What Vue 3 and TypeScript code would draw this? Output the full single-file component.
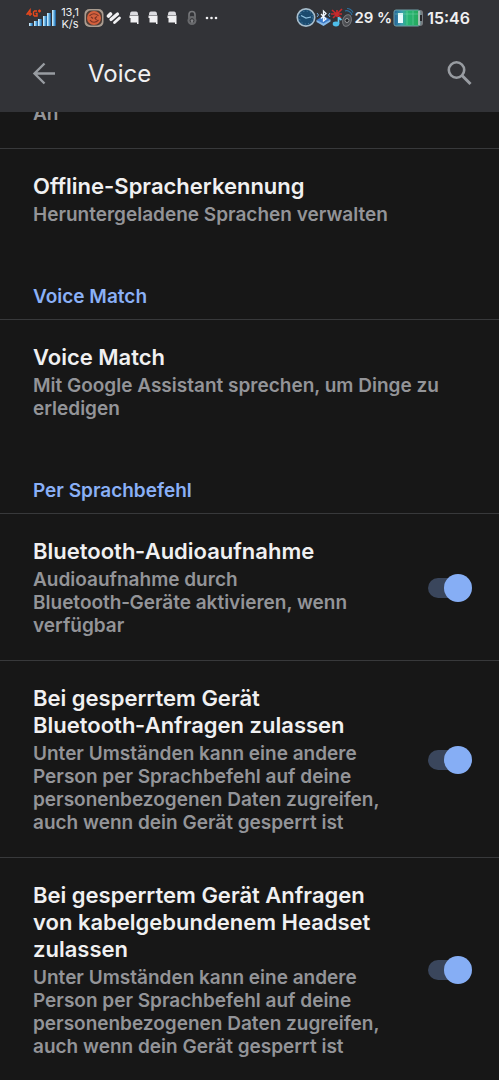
<script setup lang="ts">
import { ref } from 'vue'

interface ToggleSetting {
  id: string
  title: string
  description: string
  enabled: boolean
}

const toggles = ref<ToggleSetting[]>([
  {
    id: 'bt-audio',
    title: 'Bluetooth‑Audioaufnahme',
    description: 'Audioaufnahme durch Bluetooth‑Geräte aktivieren, wenn verfügbar',
    enabled: true,
  },
  {
    id: 'bt-locked',
    title: 'Bei gesperrtem Gerät Bluetooth‑Anfragen zulassen',
    description:
      'Unter Umständen kann eine andere Person per Sprachbefehl auf deine personenbezogenen Daten zugreifen, auch wenn dein Gerät gesperrt ist',
    enabled: true,
  },
  {
    id: 'wired-locked',
    title: 'Bei gesperrtem Gerät Anfragen von kabelgebundenem Headset zulassen',
    description:
      'Unter Umständen kann eine andere Person per Sprachbefehl auf deine personenbezogenen Daten zugreifen, auch wenn dein Gerät gesperrt ist',
    enabled: true,
  },
])
</script>

<template>
  <div class="screen">
    <header class="header">
      <div class="status">
        <div class="status-group">
          <svg class="signal" width="32" height="20" viewBox="0 0 32 20" aria-hidden="true">
            <defs>
              <linearGradient id="bar" x1="0" y1="0" x2="1" y2="0">
                <stop offset="0" stop-color="#e4f6ff" />
                <stop offset="0.5" stop-color="#63b4e6" />
                <stop offset="1" stop-color="#15518f" />
              </linearGradient>
            </defs>
            <g fill="none" stroke="#e8481c" stroke-width="1.4">
              <path d="M4 8V2L1 6h5M11 3H8.500L7.500 4v3l1 1H11V5.500H9.500M12 3h3M13.500 1.500v3" />
            </g>
            <g fill="url(#bar)">
              <rect x="3" y="15" width="4" height="3" />
              <rect x="8" y="13" width="4" height="5" />
              <rect x="12" y="11" width="4" height="7" />
              <rect x="17" y="8" width="4" height="10" />
              <rect x="21" y="5" width="4" height="13" />
              <rect x="26" y="2" width="4" height="16" />
            </g>
          </svg>
          <span class="speed"><span>13,1</span><span>K/s</span></span>
          <svg width="20" height="20" viewBox="0 0 20 20" aria-hidden="true">
            <rect x="0.500" y="1" width="19" height="18" rx="5" fill="#a99c90" />
            <rect x="2" y="2.500" width="16" height="15" rx="5" fill="#4d3c35" />
            <circle cx="10" cy="10" r="7" fill="#d4603d" />
            <path d="M5.500 8c2-3 7-3 9 0M6 12c2 3 6 3 8.500 0M7 9l2 1.500M13 8.500 11 10l1.500 2" fill="none" stroke="#7a3325" stroke-width="1.200" />
          </svg>
          <svg class="heart" width="16" height="14" viewBox="0 0 16 14" aria-hidden="true">
            <g fill="none" stroke="#f1f1f3" stroke-linecap="round" stroke-linejoin="round">
              <path d="M2.500 5 4.500 3" stroke-width="3.600" />
              <path d="M5 8.500 11.500 3" stroke-width="3.200" />
              <path d="M8.500 11.500 13.500 7" stroke-width="2.800" />
            </g>
          </svg>
          <svg v-for="n in 3" :key="n" class="robot" width="10" height="15" viewBox="0 0 10 15" aria-hidden="true">
            <path d="M1 4.500Q1 1.500 3 1.500h4q2 0 2 3V5H1z" fill="#dcdce0" />
            <path d="M0.500 5.500h9V14H8v-1.500H1.500V8h-1z" fill="#f1f1f3" />
          </svg>
          <svg class="lock" width="12" height="16" viewBox="0 0 12 16" aria-hidden="true">
            <path d="M3 8V4.500a3 3 0 0 1 6 0V8" fill="none" stroke="#77787b" stroke-width="1.600" />
            <circle cx="6" cy="10.500" r="4.500" fill="#68696c" />
            <circle cx="6" cy="10.500" r="2" fill="none" stroke="#3a3b3e" />
            <path d="M6 10v3" stroke="#a0a1a4" />
          </svg>
          <svg class="dots" width="14" height="4" viewBox="0 0 14 4" aria-hidden="true">
            <g fill="#f1f1f3">
              <circle cx="2" cy="2" r="1.300" />
              <circle cx="6.500" cy="2" r="1.300" />
              <circle cx="11" cy="2" r="1.300" />
            </g>
          </svg>
        </div>
        <div class="status-group">
          <svg width="58" height="22" viewBox="0 0 58 22" aria-hidden="true">
            <circle cx="10" cy="10.500" r="8.700" fill="#1b4a6e" stroke="#a6bccb" stroke-width="1.700" />
            <circle cx="10" cy="10.500" r="6.500" fill="none" stroke="#4d86ad" stroke-dasharray="1 2.400" />
            <path d="M5 8.500l5 2.500 5-1" fill="none" stroke="#8fc1e0" stroke-width="1.200" />
            <path d="M20.500 13l7-4 7 3.500-7 5z" fill="#3978c8" />
            <path d="M20.500 13l7 3.500 7-4v2l-7 4.500-7-4z" fill="#86b9e8" />
            <path d="M25 7l5 5-2.500 2V4L30 6.500l-5 5" fill="none" stroke="#f2f8ff" stroke-width="1.300" />
            <path d="M21 6l1.500 2L21 10M34 6l-1.500 2 1.500 2" fill="none" stroke="#70a8dc" />
            <path d="M36 3l9 8M46 2l-9 9M35 7h11M41 3v7" stroke="#c92a2c" stroke-width="1.600" />
            <path d="M42.500 10v7M42.500 10.500l3 2.500" stroke="#62c9ef" stroke-width="1.700" />
            <ellipse cx="40" cy="17" rx="3.300" ry="2.400" fill="#4ebde9" />
            <ellipse cx="51" cy="13.500" rx="4.200" ry="6" transform="rotate(18 51 13.500)" fill="#4b4d51" stroke="#77797d" />
            <circle cx="51" cy="13.500" r="2" fill="#222326" stroke="#96979a" />
            <path d="M49 4c3-1 6 1 7 4M51 1.500c4 0 5 2 6 4" fill="none" stroke="#2c6f9d" stroke-width="1.200" />
          </svg>
          <span class="percent">29 %</span>
          <svg class="battery" width="31" height="18" viewBox="0 0 31 18" aria-hidden="true">
            <defs>
              <linearGradient id="cell" x1="0" y1="0" x2="1" y2="0">
                <stop offset="0" stop-color="#235f96" />
                <stop offset="0.300" stop-color="#3c9faf" />
                <stop offset="0.500" stop-color="#28b777" />
                <stop offset="1" stop-color="#25a758" />
              </linearGradient>
            </defs>
            <rect x="24" y="1" width="6" height="16" rx="3" fill="#777c80" />
            <rect x="1" y="1" width="26" height="16" rx="2" fill="url(#cell)" stroke="#6f9fa6" />
            <rect x="5" y="4" width="5" height="10" fill="#e9fbff" />
            <path d="M14 2v14M20 2v14M2 5h23" stroke="#83dbb5" stroke-opacity="0.450" />
            <path d="M26 2v14" stroke="#c1c6c6" stroke-width="1.600" />
            <path d="M28 6v6" stroke="#27292d" stroke-width="2" />
          </svg>
          <time class="clock">15:46</time>
        </div>
      </div>
      <div class="toolbar">
        <button class="icon-button" type="button" aria-label="Zurück">
          <svg width="24" height="24" viewBox="0 0 24 24" fill="none" stroke="#989ca1" stroke-width="2.400">
            <path d="M23 11.500H3M12.500 1.500l-10 10 10 10" />
          </svg>
        </button>
        <h1>Voice</h1>
        <button class="icon-button search" type="button" aria-label="Suchen">
          <svg width="26" height="26" viewBox="0 0 26 26" fill="none" stroke="#989ca1">
            <circle cx="9.500" cy="9" r="7.700" stroke-width="2.600" />
            <path d="m15 14.500 8.500 8.500" stroke-width="3" />
          </svg>
        </button>
      </div>
    </header>

    <main class="settings">
      <section class="group">
        <button class="row clipped" type="button"><span class="description">An</span></button>
        <button class="row last" type="button">
          <span class="title">Offline-Spracherkennung</span>
          <span class="description">Heruntergeladene Sprachen verwalten</span>
        </button>
      </section>
      <section class="group">
        <h2>Voice Match</h2>
        <button class="row last" type="button">
          <span class="title">Voice Match</span>
          <span class="description">Mit Google Assistant sprechen, um Dinge zu erledigen</span>
        </button>
      </section>
      <section class="group">
        <h2>Per Sprachbefehl</h2>
        <label v-for="item in toggles" :key="item.id" class="row toggle-row" :for="item.id">
          <span class="texts">
            <span class="title">{{ item.title }}</span>
            <span class="description">{{ item.description }}</span>
          </span>
          <input :id="item.id" v-model="item.enabled" class="switch" type="checkbox" role="switch" />
        </label>
      </section>
    </main>
  </div>
</template>

<style>
html,
body {
  background: #171717;
}
body {
  overflow-x: hidden;
}
</style>

<style scoped>
.screen {
  height: 100vh;
  overflow: hidden;
  background: #171717;
  color: #f0f0f1;
  font-family: Inter, "Liberation Sans", sans-serif;
}
button {
  border: 0;
  background: none;
  color: inherit;
  font: inherit;
  text-align: left;
}
.header {
  position: relative;
  z-index: 1;
  background: #323337;
}
.status {
  display: flex;
  justify-content: space-between;
  height: 35px;
  padding: 0 29px 0 26px;
}
.status-group {
  display: flex;
  align-items: center;
}
.speed {
  display: flex;
  flex-direction: column;
  align-items: center;
  width: 20px;
  margin: 0 4px 0 2px;
  font-size: 11px;
  line-height: 12px;
}
.status-group > svg {
  flex: none;
}
.heart {
  margin-left: 2px;
}
.robot {
  margin-left: 9px;
}
.heart + .robot {
  margin-left: 7px;
}
.lock {
  margin-left: 9px;
}
.dots {
  margin-left: 7px;
}
.percent,
.clock {
  font-size: 16px;
  font-weight: 600;
  white-space: nowrap;
}
.percent {
  font-size: 15px;
}
.battery {
  margin: 0 3px 0 1px;
}
.toolbar {
  display: flex;
  align-items: center;
  height: 77px;
  padding: 0 26px 0 32px;
}
.icon-button {
  display: flex;
  padding: 0;
  cursor: pointer;
}
h1 {
  flex: 1;
  margin: 0 0 0 32px;
  font-size: 24px;
  font-weight: 400;
  line-height: 32px;
}
.settings {
  margin-top: -10px;
}
.row {
  display: block;
  box-sizing: border-box;
  width: 100%;
  padding: 24px 27px 23px 33px;
  border-bottom: 1px solid #38393b;
  cursor: pointer;
}
.clipped {
  padding-top: 0;
}
.last {
  border-bottom: 0;
}
.title,
.description {
  display: block;
  font-weight: 600;
}
.title {
  font-size: 22px;
  line-height: 27px;
}
.description {
  font-size: 19px;
  line-height: 23px;
  color: #939498;
}
.title + .description {
  margin-top: 3px;
}
h2 {
  margin: 0;
  padding: 36px 33px 11px;
  border-bottom: 1px solid #38393b;
  color: #8ab0f6;
  font-size: 19px;
  font-weight: 600;
  line-height: 23px;
}
.toggle-row {
  display: flex;
  align-items: center;
  gap: 44px;
}
.texts {
  flex: 1;
}
.switch {
  position: relative;
  flex: none;
  width: 44px;
  height: 28px;
  margin: 0;
  appearance: none;
  cursor: pointer;
}
.switch::before {
  position: absolute;
  inset: 4px 2px 4px 0;
  border-radius: 10px;
  background: #3a465c;
  content: "";
}
.switch::after {
  position: absolute;
  top: 0;
  left: 0;
  width: 28px;
  height: 28px;
  border-radius: 50%;
  background: #9a9ca0;
  content: "";
}
.switch:checked::after {
  left: 16px;
  background: #86aef5;
}
</style>
